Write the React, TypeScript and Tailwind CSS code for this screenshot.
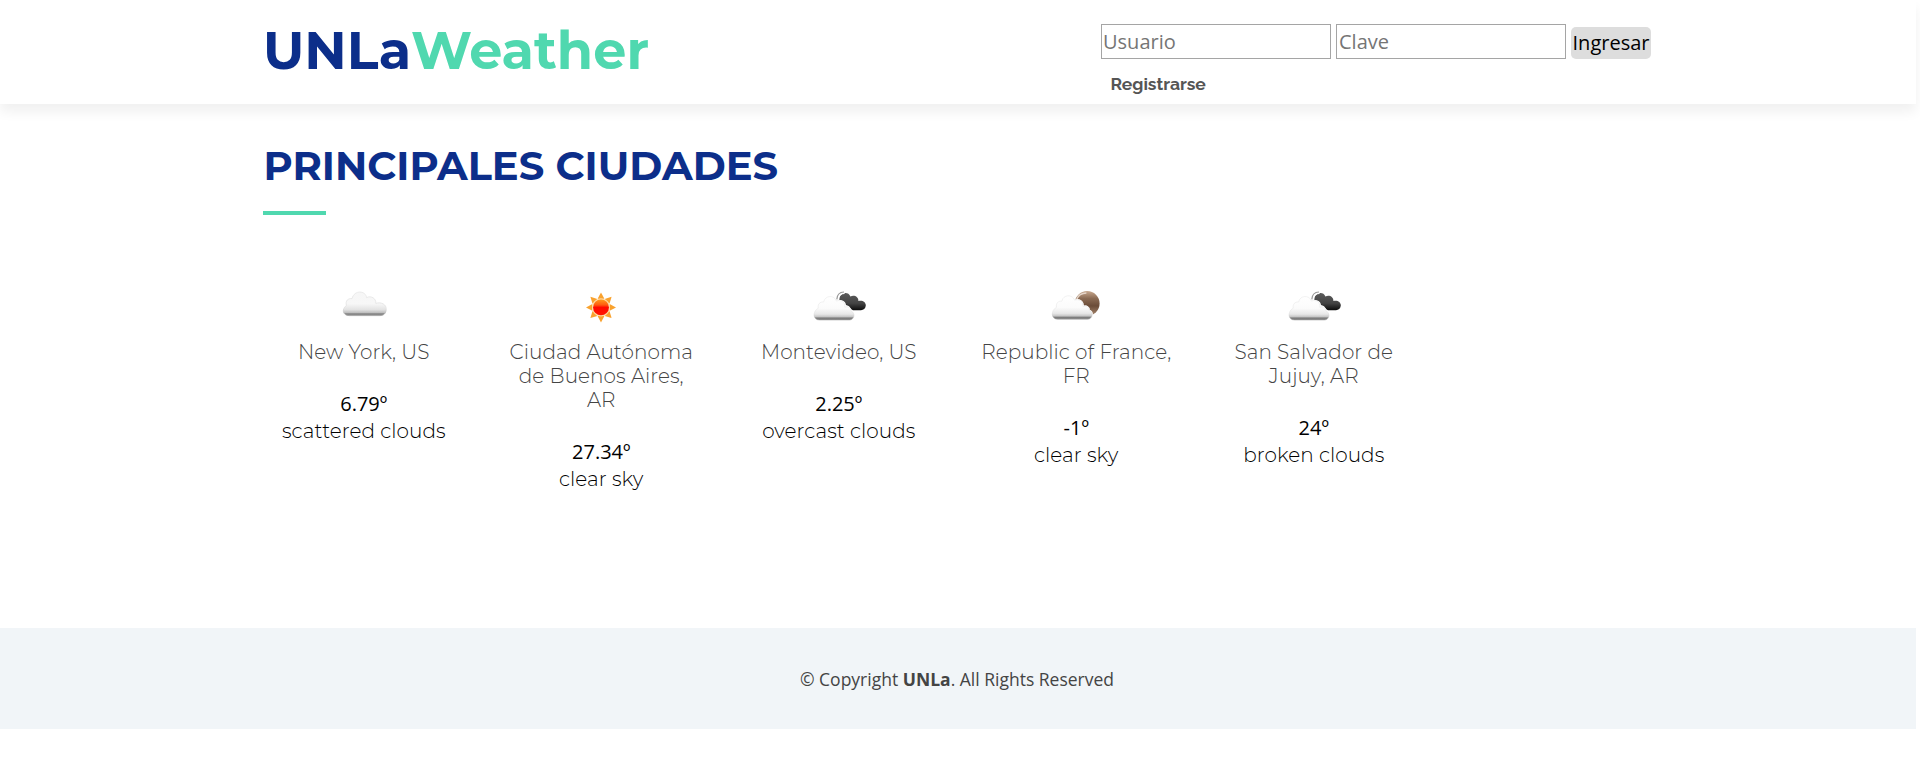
type IconName = "cloud" | "sun" | "overcast" | "night";

type City = {
  icon: IconName;
  name: string;
  temp: string;
  sky: string;
};

const cities: City[] = [
  { icon: "cloud", name: "New York, US", temp: "6.79º", sky: "scattered clouds" },
  { icon: "sun", name: "Ciudad Autónoma de Buenos Aires, AR", temp: "27.34º", sky: "clear sky" },
  { icon: "overcast", name: "Montevideo, US", temp: "2.25º", sky: "overcast clouds" },
  { icon: "night", name: "Republic of France, FR", temp: "-1º", sky: "clear sky" },
  { icon: "overcast", name: "San Salvador de Jujuy, AR", temp: "24º", sky: "broken clouds" },
];

function Gradients() {
  return (
    <svg className="absolute h-0 w-0" aria-hidden="true">
      <defs>
        <linearGradient id="cloudFill" x1="0" y1="0" x2="0" y2="1">
          <stop offset="0" stopColor="#f6f6f6" />
          <stop offset="0.5" stopColor="#f7f7f7" />
          <stop offset="0.75" stopColor="#e2e2e2" />
          <stop offset="0.88" stopColor="#bdbdbd" />
          <stop offset="0.92" stopColor="#858585" />
          <stop offset="1" stopColor="#8d8d8d" />
        </linearGradient>
        <linearGradient id="frontFill" x1="0" y1="0" x2="0" y2="1">
          <stop offset="0" stopColor="#ffffff" />
          <stop offset="0.5" stopColor="#fbfbfb" />
          <stop offset="0.75" stopColor="#e8e8e8" />
          <stop offset="0.87" stopColor="#c4c4c4" />
          <stop offset="0.91" stopColor="#7c7c7c" />
          <stop offset="1" stopColor="#848484" />
        </linearGradient>
        <linearGradient id="cloudEdge" x1="0" y1="0" x2="0" y2="1">
          <stop offset="0" stopColor="#e6e6e6" />
          <stop offset="0.7" stopColor="#e0e0e0" />
          <stop offset="1" stopColor="#a0a0a0" />
        </linearGradient>
        <linearGradient id="darkFill" x1="0" y1="0" x2="0" y2="1">
          <stop offset="0" stopColor="#5c5c5c" />
          <stop offset="0.6" stopColor="#444444" />
          <stop offset="1" stopColor="#0c0c0c" />
        </linearGradient>
        <linearGradient id="moonFill" x1="0" y1="0" x2="0" y2="1">
          <stop offset="0" stopColor="#c9a98f" />
          <stop offset="0.3" stopColor="#8b6b54" />
          <stop offset="0.6" stopColor="#6b4c38" />
          <stop offset="1" stopColor="#a98a72" />
        </linearGradient>
        <linearGradient id="sunFill" x1="0" y1="0" x2="0" y2="1">
          <stop offset="0" stopColor="#ff9a1c" />
          <stop offset="0.35" stopColor="#ff5a10" />
          <stop offset="0.5" stopColor="#ff0a00" />
          <stop offset="1" stopColor="#ff1400" />
        </linearGradient>
      </defs>
    </svg>
  );
}

const frontCloud =
  "M12.5 45 C5.4 45 5.6 36 11.2 33.2 C10.6 29 13 26.6 16.6 27 C18 20 27.4 19.8 29.4 26 C34 24.2 38.6 27.4 37.8 32.2 C41.4 31 44.4 33 44 36 C48.6 37.6 47.6 45 42.4 45 Z";

function FrontCloud() {
  return <path d={frontCloud} fill="url(#frontFill)" stroke="url(#cloudEdge)" strokeWidth="0.5" />;
}

function WeatherIcon({ name }: { name: IconName }) {
  return (
    <svg className="h-16 w-16" viewBox="0 0 64 64" aria-hidden="true">
      {name === "cloud" && (
        <path
          d="M17 40.6 C10.4 40.6 9.6 33.4 14.4 30.6 C13.2 25.6 16 23.2 20 23.6 C22.4 14.6 33.6 15.4 34.6 22.6 C39 20.2 44.4 23.6 43.8 28.4 C49 26.6 54.6 29.4 54.2 34.4 C54 38.4 51.6 40.6 48 40.6 Z"
          fill="url(#cloudFill)"
          stroke="url(#cloudEdge)"
          strokeWidth="0.8"
        />
      )}
      {name === "sun" && (
        <g transform="translate(32 32.4)">
          {[0, 45, 90, 135, 180, 225, 270, 315].map((angle) => (
            <path
              key={angle}
              d="M-3.4 -8.6 L0 -15 L3.4 -8.6 Z"
              transform={`rotate(${angle})`}
              fill="#f9a22e"
            />
          ))}
          <circle r="9" fill="#ffd9a0" />
          <circle r="7.9" fill="url(#sunFill)" />
        </g>
      )}
      {name === "overcast" && (
        <g>
          <path
            d="M32.4 23 C33 17.6 41.4 15.6 43.4 21.4 C47.4 19.6 51.6 21.8 51.4 26 C55 24.8 59 26.8 58.8 30.6 C58.6 33.6 56.4 35.2 54 35.2 L46 35.2 C43.4 34.4 43.6 31 39 30 C38.6 26.6 36 25 32.4 25 Z"
            fill="url(#darkFill)"
          />
          <path
            d="M30.4 24.4 C30.8 20.4 33.4 17.4 37.6 17.4"
            fill="none"
            stroke="#ffffff"
            strokeWidth="3"
          />
          <path
            d="M29.8 24.4 C30 20.2 32.6 17.2 37 17"
            fill="none"
            stroke="#9a9a9a"
            strokeWidth="1.2"
          />
          <FrontCloud />
        </g>
      )}
      {name === "night" && (
        <g>
          <circle cx="43.2" cy="28.4" r="12.4" fill="url(#moonFill)" />
          <path
            d="M32.6 24.6 C34.4 19.8 38.6 18 42.4 18"
            fill="none"
            stroke="#e6d6ca"
            strokeWidth="1.5"
          />
          <g transform="translate(1.2 -0.8)">
            <path d={frontCloud} fill="none" stroke="#ffffff" strokeWidth="1.4" />
            <FrontCloud />
          </g>
        </g>
      )}
    </svg>
  );
}

function Header() {
  return (
    <header className="h-[104px] bg-white shadow-[0_7.5px_11.25px_0_rgba(0,0,0,0.06)]">
      <div className="ml-[245px] flex w-[1425px] justify-between pl-[18px]">
        <h1 className="mt-5 h-[60px] font-['Montserrat',sans-serif] text-[52.5px] leading-[60px] font-bold whitespace-nowrap text-[#0c2e8a]">
          UNLa<span className="text-[#50d8af]">Weather</span>
        </h1>
        <div className="mt-6 w-[569px] shrink-0">
          <form className="flex items-end gap-[5px]">
            <input
              className="h-[35px] w-[230px] border border-[#a5a5a5] px-px text-[20px] placeholder:text-[#757575]"
              placeholder="Usuario"
            />
            <input
              className="h-[35px] w-[230px] border border-[#a5a5a5] px-[2px] text-[20px] placeholder:text-[#757575]"
              placeholder="Clave"
            />
            <button
              type="button"
              className="h-8 w-20 rounded-[5px] bg-[#dddddd] text-[20px] leading-8 whitespace-nowrap text-black"
            >
              Ingresar
            </button>
          </form>
          <a className="mt-3 block pl-[9.5px] font-['Raleway',sans-serif] text-[17.5px] leading-[26px] font-bold text-[#555555]">
            Registrarse
          </a>
        </div>
      </div>
    </header>
  );
}

function CityCard({ city }: { city: City }) {
  return (
    <div className="flex w-[237.5px] flex-col items-center px-5 text-center">
      <WeatherIcon name={city.icon} />
      <h4 className="mt-px mb-[26px] font-['Montserrat',sans-serif] text-[20px] leading-6 font-[340] tracking-[0.06px] text-[#444444]">
        {city.name}
      </h4>
      <p className="text-[20px] leading-[27px] text-black">{city.temp}</p>
      <p className="font-['Montserrat',sans-serif] text-[20px] leading-[28px] font-[340] tracking-[0.06px] text-black">
        {city.sky}
      </p>
    </div>
  );
}

export default function App() {
  return (
    <div className="min-h-[763px] w-full bg-white font-['Open_Sans',sans-serif]">
      <Gradients />
      <div className="w-[1916px]">
        <Header />
        <main className="ml-[245px] h-[524px] w-[1425px] pt-[38px]">
          <div className="pl-[18px]">
            <h2 className="h-12 pl-[0.5px] font-['Montserrat',sans-serif] text-[40px] leading-[48px] font-bold tracking-[0.03px] whitespace-nowrap text-[#0c2e8a]">
              PRINCIPALES CIUDADES
            </h2>
            <div className="mt-[21px] h-1 w-[63px] bg-[#50d8af]" />
          </div>
          <section className="mt-[60px] flex items-start">
            {cities.map((city) => (
              <CityCard key={city.name} city={city} />
            ))}
          </section>
        </main>
        <footer className="h-[101px] bg-[#f1f5f8] pt-[38px] pr-[2px] text-center text-[17.5px] leading-[26px] text-[#444444]">
          © Copyright <strong className="font-bold">UNLa</strong>. All Rights Reserved
        </footer>
      </div>
    </div>
  );
}
